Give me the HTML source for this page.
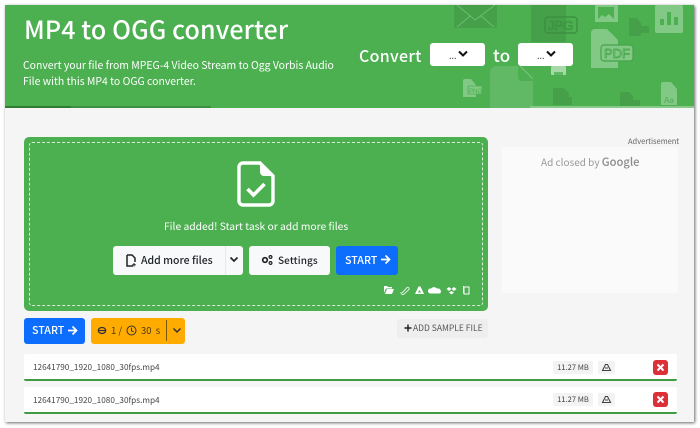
<!DOCTYPE html>
<html><head><meta charset="utf-8"><style>
*{box-sizing:border-box}
html,body{margin:0;padding:0;width:700px;height:428px;overflow:hidden;background:#fff;font-family:"Noto Sans CJK SC","Liberation Sans",sans-serif}
.a{position:absolute;white-space:nowrap}
.btn{position:absolute;border-radius:3px;display:flex;align-items:center;justify-content:center;white-space:nowrap}
</style></head><body>
<div class="a" style="left:5px;top:5px;width:689px;height:417px;background:#f5f5f5;box-shadow:1px 1px 3px rgba(0,0,0,.6)"></div>
<div class="a" style="left:5px;top:5px;width:689px;height:103px;background:#4caf50;overflow:hidden"></div>
<svg class="a" style="left:350px;top:5px" width="344" height="103" viewBox="350 5 344 103">
<g fill="#46a04a"><path d="M454 5h43v21a2 2 0 0 1-2 2h-39a2 2 0 0 1-2-2z"/><path d="M531 5h35v37h-35z"/><path d="M629 18h8l4 5v13h-12z"/><rect x="636" y="26" width="13" height="7" rx="1"/><path d="M553 88h10l6 5v12h-16z"/><rect x="562" y="97" width="10" height="8"/><path d="M620 92h9l4 4v12h-13z"/><rect x="628" y="100" width="12" height="8"/></g>
<g stroke="#6cbd70" fill="none" stroke-width="1"><path d="M457 5l18 15 20-15M457 27l13-11M494 27l-13-11"/></g>
<rect x="545" y="17" width="32" height="16" rx="3" fill="none" stroke="#3a8c3e" stroke-width="1.200"/>
<text x="548" y="30" font-size="13" fill="none" stroke="#3a8c3e" stroke-width=".6" font-family="Liberation Sans">JPG</text>
<path d="M490 72a6 6 0 0 1 6-6h22l15 15v27h-43z" fill="#61b865"/><path d="M518 66v11a4 4 0 0 0 4 4h11z" fill="#4caf50"/><path d="M520 66l13 13" stroke="#7cc47f" fill="none"/>
<g fill="#82c985"><rect x="595" y="5" width="23" height="17"/><path d="M591 33a4 4 0 0 1 4-4h12l11 11v28h-27z"/><rect x="655" y="5" width="28" height="28" rx="2"/><path d="M463 81a2 2 0 0 1 2-2h6l5 6v12h-13z"/><path d="M661 84a2 2 0 0 1 2-2h8l6 7v16h-16z"/><path d="M461 43h8l4 4v4h-12z" opacity=".4"/></g>
<rect x="551" y="66" width="15" height="9" rx="1" fill="#a7d9a9"/><rect x="554" y="72" width="9" height="3" fill="#62b866"/>
<g fill="#4caf50"><path d="M598 7h16v12l-5-5-4 3-3-2-4 4z"/><rect x="660" y="19" width="4" height="6"/><rect x="667" y="12" width="4" height="13"/><rect x="674" y="17" width="4" height="8"/></g>
<rect x="468" y="86" width="14" height="8" rx="1" fill="#82c985" stroke="#4caf50" stroke-width=".8"/>
<text x="469" y="93" font-size="6" fill="#4caf50" font-family="Liberation Sans">PNG</text>
<rect x="601" y="45" width="32" height="16" rx="3" fill="#82c985" stroke="#46a34a" stroke-width="1.200"/>
<text x="604" y="58" font-size="13" fill="none" stroke="#46a34a" stroke-width=".7" font-family="Liberation Sans">PDF</text>
<text x="664" y="103" font-size="8" fill="#4caf50" font-family="Liberation Sans">Aa</text>
</svg>
<div class="a" style="left:5px;top:106px;width:66px;height:2px;background:#2f7d33"></div>
<div class="a" style="left:71px;top:106px;width:140px;height:2px;background:#3d8f41"></div>
<div class="a" style="left:530px;top:106px;width:164px;height:2px;background:#86c989"></div>
<div class="a" style="left:24px;top:11px;font-size:25px;line-height:36px;font-weight:500;color:#fff;letter-spacing:.12px">MP4 to OGG converter</div>
<div class="a" style="left:23px;top:58px;font-size:10.450px;line-height:16px;color:#fff">Convert your file from MPEG-4 Video Stream to Ogg Vorbis Audio<br>File with this MP4 to OGG converter.</div>
<div class="a" style="left:359px;top:42px;font-size:16px;line-height:26px;font-weight:500;color:#fff;letter-spacing:.3px">Convert</div>
<div class="a" style="left:493px;top:42px;font-size:17px;line-height:26px;font-weight:500;color:#fff;letter-spacing:.3px">to</div>
<div class="btn" style="left:430px;top:43px;width:55px;height:23px;background:#fff"></div>
<div class="btn" style="left:518px;top:43px;width:55px;height:23px;background:#fff"></div>
<div class="a" style="left:449px;top:50px;font-size:9px;line-height:12px;color:#444">...</div>
<div class="a" style="left:537px;top:50px;font-size:9px;line-height:12px;color:#444">...</div>
<svg class="a" style="left:457px;top:50px" width="12" height="8"><path d="M2 1.500l4 4 4-4" fill="none" stroke="#111" stroke-width="2"/></svg>
<svg class="a" style="left:545px;top:50px" width="12" height="8"><path d="M2 1.500l4 4 4-4" fill="none" stroke="#111" stroke-width="2"/></svg>

<div class="a" style="left:24px;top:137px;width:464px;height:174px;background:#4caf50;border-radius:5px"></div>
<div class="a" style="left:29px;top:142px;width:454px;height:164px;border:1px dashed #d8eed9;border-radius:3px"></div>
<svg class="a" style="left:236px;top:160px" width="40" height="48" viewBox="0 0 40 48"><path d="M7 3h17l13 13v25a4 4 0 0 1-4 4H7a4 4 0 0 1-4-4V7a4 4 0 0 1 4-4z" fill="none" stroke="#fff" stroke-width="3.400"/><path d="M24 3v9a4 4 0 0 0 4 4h9z" fill="#fff"/><path d="M11.500 29l6 6 11-11" fill="none" stroke="#fff" stroke-width="3.600"/></svg>
<div class="a" style="left:164px;top:217px;font-size:10.300px;line-height:17px;color:#fff">File added! Start task or add more files</div>
<div class="btn" style="left:113px;top:246px;width:130px;height:29px;background:#f8f9fa"></div>
<div class="a" style="left:225px;top:246px;width:1px;height:29px;background:#e8e8e8"></div>
<svg class="a" style="left:126px;top:254px" width="10" height="13" viewBox="0 0 10 13"><path d="M1 1h5l3 3v4M7 12H1V1" fill="none" stroke="#222" stroke-width="1.500"/><path d="M8 9v3.500M6.200 10.800h3.600" stroke="#222" stroke-width="1"/></svg>
<div class="a" style="left:141px;top:252px;font-size:10.500px;line-height:17px;font-weight:500;color:#212529">Add more files</div>
<svg class="a" style="left:228px;top:256px" width="12" height="8"><path d="M2.500 1.500l3.500 3.500 3.500-3.500" fill="none" stroke="#212529" stroke-width="1.700"/></svg>
<div class="btn" style="left:249px;top:246px;width:81px;height:29px;background:#f8f9fa"></div>
<svg class="a" style="left:261px;top:254px" width="12" height="12" viewBox="0 0 12 12"><circle cx="4" cy="6" r="2.300" fill="none" stroke="#222" stroke-width="1.700"/><circle cx="9.500" cy="3" r="1.400" fill="none" stroke="#222" stroke-width="1.200"/><circle cx="9.500" cy="9" r="1.400" fill="none" stroke="#222" stroke-width="1.200"/></svg>
<div class="a" style="left:278px;top:251px;font-size:10px;line-height:17px;font-weight:500;color:#212529;letter-spacing:.1px">Settings</div>
<div class="btn" style="left:336px;top:246px;width:62px;height:29px;background:#0d6efd"></div>
<div class="a" style="left:345px;top:252px;font-size:10.700px;line-height:17px;font-weight:500;color:#fff">START</div>
<svg class="a" style="left:380px;top:254px" width="11" height="11" viewBox="0 0 11 11"><path d="M1 5.500h8.500M5.500 1.500l4 4-4 4" fill="none" stroke="#fff" stroke-width="1.700"/></svg>
<svg class="a" style="left:382px;top:284px" width="90" height="12" viewBox="0 0 90 12">
<path d="M2 2h3l1 1h4v1.500H4L2 9z M3 10l2-5h7l-2 5z" fill="#fff"/>
<path d="M20 9l5-5.500a1.500 1.500 0 0 1 2 2l-5.500 5a2 2 0 0 1-2.500-2.500" fill="none" stroke="#dff0df" stroke-width="1"/>
<path d="M33 10l3.500-7.500h2L42 10z" fill="#fff"/><path d="M37 6.500h.8l1.200 2h-3z" fill="#4caf50"/>
<path d="M48 9.500a2.500 2.500 0 0 1 1-5 4 4 0 0 1 6 0 3 3 0 0 1 3 5z" fill="#fff"/>
<path d="M67 3l2.500 2-2.500 2-2.500-2zM72 3l2.500 2-2.500 2-2.500-2zM67 8.500l2.500-1.500 2.500 1.500-2.500 2z" fill="#fff"/>
<path d="M83 3h4v7h-5V3zM81.500 2v7" fill="none" stroke="#fff" stroke-width="1"/>
</svg>

<div class="a" style="left:628px;top:136px;font-size:7.500px;line-height:11px;color:#666">Advertisement</div>
<div class="a" style="left:502px;top:147px;width:176px;height:146px;background:#fafafa"></div>
<div class="a" style="left:541px;top:154px;font-size:10px;line-height:15px;color:#999">Ad closed by <span style="font-size:11.200px;font-weight:500;color:#8a8a8a">Google</span></div>

<div class="btn" style="left:24px;top:318px;width:61px;height:26px;background:#0d6efd"></div>
<div class="a" style="left:32px;top:322px;font-size:10.700px;line-height:17px;font-weight:500;color:#fff">START</div>
<svg class="a" style="left:67px;top:325px" width="11" height="11" viewBox="0 0 11 11"><path d="M1 5.500h8.500M5.500 1.500l4 4-4 4" fill="none" stroke="#fff" stroke-width="1.700"/></svg>
<div class="btn" style="left:91px;top:318px;width:94px;height:26px;background:#ffab00"></div>
<svg class="a" style="left:97px;top:326px" width="10" height="9"><ellipse cx="5" cy="4.500" rx="3.700" ry="3" fill="none" stroke="#333" stroke-width="1.300"/><path d="M1 4.500h8" stroke="#333" stroke-width="1.200"/></svg>
<div class="a" style="left:111px;top:322px;font-size:9.500px;line-height:17px;color:#4a3a10">1 /</div>
<svg class="a" style="left:126px;top:325px" width="11" height="11" viewBox="0 0 11 11"><circle cx="5.500" cy="5.500" r="4.500" fill="none" stroke="#333" stroke-width="1"/><path d="M5.500 2.800v3l2 1" fill="none" stroke="#333"/></svg>
<div class="a" style="left:141px;top:322px;font-size:9.500px;line-height:17px;color:#4a3a10">30&nbsp; s</div>
<div class="a" style="left:166px;top:320px;width:1px;height:21px;background:#7a5a00"></div>
<svg class="a" style="left:171px;top:327px" width="12" height="8"><path d="M2.500 1.500l3.500 3.500 3.500-3.500" fill="none" stroke="#333" stroke-width="1.500"/></svg>

<div class="btn" style="left:397px;top:319px;width:91px;height:19px;background:#eeeeee"></div>
<svg class="a" style="left:404px;top:324px" width="8" height="8"><path d="M4 .5v7M.5 4h7" stroke="#222" stroke-width="1.500"/></svg>
<div class="a" style="left:413px;top:321px;font-size:8.500px;line-height:15px;color:#555">ADD SAMPLE FILE</div>

<div class="a" style="left:24px;top:354px;width:653px;height:27px;background:#fff;border-bottom:2px solid #3f9c44;border-radius:2px"></div>
<div class="a" style="left:24px;top:387px;width:653px;height:27px;background:#fff;border-bottom:2px solid #3f9c44;border-radius:2px"></div>

<div class="a" style="left:33px;top:360px;font-size:8.200px;line-height:14px;color:#444">12641790_1920_1080_30fps.mp4</div>
<div class="a" style="left:33px;top:393px;font-size:8.200px;line-height:14px;color:#444">12641790_1920_1080_30fps.mp4</div>

<div class="btn" style="left:553px;top:361px;width:40px;height:13px;background:#f3f3f3;font-size:7.600px;color:#444;border-radius:2px">11.27 MB</div>
<div class="btn" style="left:553px;top:393px;width:40px;height:13px;background:#f3f3f3;font-size:7.600px;color:#444;border-radius:2px">11.27 MB</div>
<div class="a" style="left:598px;top:361px;width:17px;height:13px;background:#f3f3f3"></div>
<div class="a" style="left:598px;top:393px;width:17px;height:13px;background:#f3f3f3"></div>
<svg class="a" style="left:601px;top:362px" width="11" height="11" viewBox="0 0 11 11"><path d="M1.500 8.500l3-6h2l3 6zM4 6h3" fill="none" stroke="#444" stroke-width="1.100"/></svg>
<svg class="a" style="left:601px;top:394px" width="11" height="11" viewBox="0 0 11 11"><path d="M1.500 8.500l3-6h2l3 6zM4 6h3" fill="none" stroke="#444" stroke-width="1.100"/></svg>

<div class="btn" style="left:653px;top:360px;width:15px;height:15px;background:#dc3038"></div>
<div class="btn" style="left:653px;top:392px;width:15px;height:15px;background:#dc3038"></div>
<svg class="a" style="left:656px;top:363px" width="9" height="9"><path d="M1.500 1.500l6 6M7.500 1.500l-6 6" stroke="#fff" stroke-width="2"/></svg>
<svg class="a" style="left:656px;top:395px" width="9" height="9"><path d="M1.500 1.500l6 6M7.500 1.500l-6 6" stroke="#fff" stroke-width="2"/></svg>
</body></html>
